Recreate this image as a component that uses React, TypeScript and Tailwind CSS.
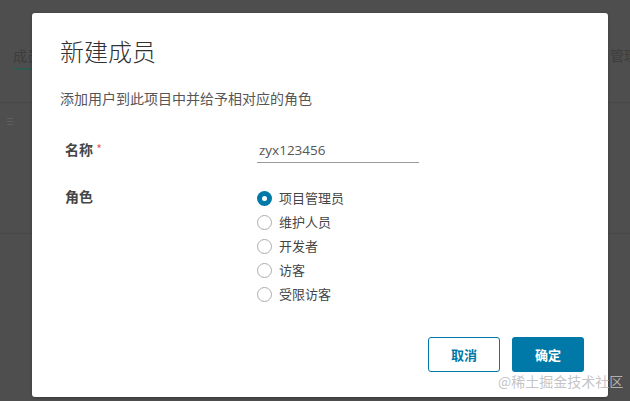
import { useState } from "react";

const ROLES = ["项目管理员", "维护人员", "开发者", "访客", "受限访客"];

const cjk = { fontFamily: '"Microsoft YaHei", "Noto Sans CJK SC", sans-serif' };

export default function App() {
  const [role, setRole] = useState(0);
  const [name, setName] = useState("zyx123456");

  return (
    <div className="relative w-[630px] h-[401px] overflow-hidden bg-[#4e4e4e]" style={cjk}>
      {/* faded page behind the modal */}
      <div className="absolute inset-0">
        <div className="absolute left-[13px] top-[45px] text-[14px] text-[#3d3d3d] whitespace-nowrap">成员</div>
        <div className="absolute left-[13px] top-[68px] w-[20px] h-[2px] bg-[#2f5a4f]" />
        <div className="absolute left-0 top-[102px] w-full h-px bg-[#474747]" />
        <div className="absolute left-[7px] top-[118px] flex flex-col gap-[2px]">
          <span className="w-[6px] h-px bg-[#5e5e5e]" />
          <span className="w-[6px] h-px bg-[#5e5e5e]" />
          <span className="w-[6px] h-px bg-[#5e5e5e]" />
        </div>
        <div className="absolute left-0 top-[233px] w-full h-px bg-[#474747]" />
        <div className="absolute left-[610px] top-[45px] text-[14px] text-[#3d3d3d] whitespace-nowrap">管理</div>
      </div>

      <div className="relative ml-[32px] mt-[13px] w-[576px] h-[384px] bg-white rounded-[3px] shadow-[0_1px_3px_rgba(0,0,0,0.3)]">
        <div className="pl-[28px] pt-[22px]">
          <h1 className="text-[24px] font-light leading-[32px] text-[#313131]">新建成员</h1>
          <p className="mt-[21px] text-[14px] leading-[20px] text-[#565656]">添加用户到此项目中并给予相对应的角色</p>
        </div>

        <div className="mt-[31px] pl-[33px] flex items-start">
          <div className="w-[192px] text-[14px] font-bold text-[#454545] leading-[20px]">
            名称 <span className="text-[#e0615a] text-[12px] font-normal align-top">*</span>
          </div>
          <input
            value={name}
            onChange={(e) => setName(e.target.value)}
            className="w-[162px] h-[24px] pl-[2px] pb-[2px] border-b border-[#9a9a9a] outline-none text-[13.5px] text-[#565656]"
            style={{ fontFamily: '"Open Sans", sans-serif' }}
          />
        </div>

        <div className="mt-[23px] pl-[33px] flex items-start">
          <div className="w-[192px] text-[14px] font-bold text-[#454545] leading-[20px]">角色</div>
          <div className="flex flex-col">
            {ROLES.map((r, i) => (
              <label key={r} className="flex items-center h-[24px] cursor-pointer" onClick={() => setRole(i)}>
                {role === i ? (
                  <span className="w-[15px] h-[15px] rounded-full bg-[#0079a8] flex items-center justify-center">
                    <span className="w-[5px] h-[5px] rounded-full bg-white" />
                  </span>
                ) : (
                  <span className="w-[15px] h-[15px] rounded-full border border-[#adadad] bg-white" />
                )}
                <span className="ml-[7px] text-[13px] text-[#454545]">{r}</span>
              </label>
            ))}
          </div>
        </div>

        <div className="absolute right-[24px] bottom-[25px] flex gap-[12px]">
          <button className="w-[72px] h-[35px] rounded-[3px] border border-[#0079a8] text-[#0079a8] text-[13px] font-bold bg-white">取消</button>
          <button className="w-[72px] h-[35px] rounded-[3px] bg-[#0079a8] text-white text-[13px] font-bold">确定</button>
        </div>
      </div>

      <div className="absolute left-[498px] top-[371px] text-[14px] text-[#bdbdbd]/90 pointer-events-none whitespace-nowrap">@稀土掘金技术社区</div>
    </div>
  );
}
